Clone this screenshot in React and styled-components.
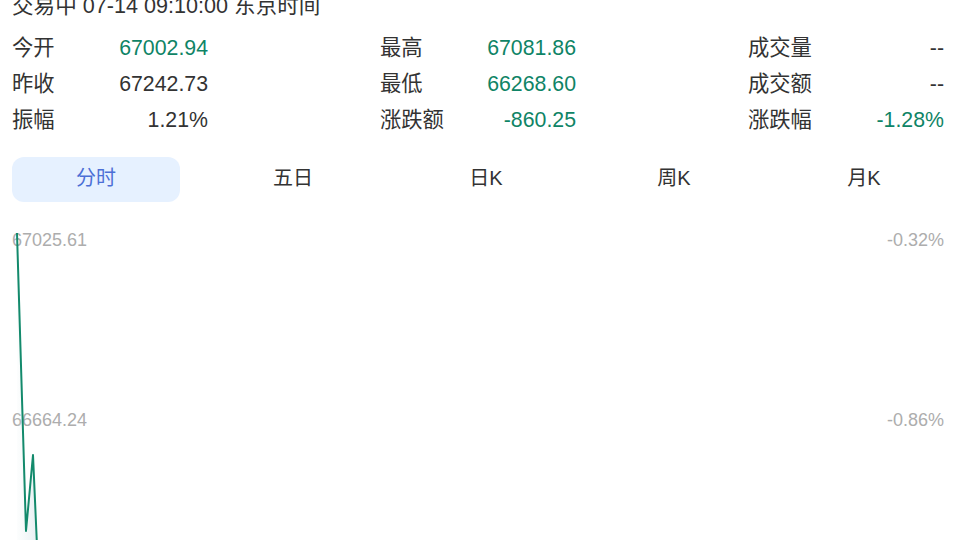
import React from "react";
import styled, { createGlobalStyle } from "styled-components";

const Global = createGlobalStyle`
  html, body { margin: 0; padding: 0; background: #fff; }
  body {
    font-family: "Liberation Sans", Arial, "Noto Sans CJK SC", sans-serif;
    color: #333;
    overflow: hidden;
  }
`;

const Page = styled.div`
  width: 960px;
  height: 540px;
  padding: 0 16px 0 12px;
  box-sizing: border-box;
  overflow: hidden;
`;

const Status = styled.div`
  margin-top: -7px;
  font-size: 21.6px;
  line-height: 26px;
  color: #333;
  white-space: nowrap;
`;

const StatsGrid = styled.div`
  margin-top: 11px;
  display: grid;
  grid-template-columns: repeat(3, 196px);
  justify-content: space-between;
  grid-auto-rows: 36px;
`;

const Stat = styled.div`
  display: flex;
  align-items: center;
  justify-content: space-between;
  font-size: 21.3px;
`;

/* CJK glyphs sit low on the Latin baseline; lift them to the digits' centre */
const StatLabel = styled.span`
  color: #333;
  padding-bottom: 5px;
`;

const StatValue = styled.span`
  color: ${(p) => (p.$tone === "down" ? "#0f8466" : "#333")};
`;

const Tabs = styled.div`
  margin-top: 19px;
  display: grid;
  grid-template-columns: repeat(5, 168px);
  justify-content: space-between;
`;

const Tab = styled.div`
  height: 45px;
  box-sizing: border-box;
  padding-bottom: 6px;
  border-radius: 12px;
  display: flex;
  align-items: center;
  justify-content: center;
  font-size: 20px;
  background: ${(p) => (p.$active ? "#e6f1ff" : "transparent")};
  color: ${(p) => (p.$active ? "#4c6fd6" : "#333")};
`;

const TabText = styled.span`
  margin-left: ${(p) => (p.$shift || 0) * 2}px;
`;

const Chart = styled.div`
  position: relative;
  margin-top: 26px;
  height: 320px;
  display: flex;
  flex-direction: column;
  gap: 156px;
`;

const AxisRow = styled.div`
  display: flex;
  justify-content: space-between;
  font-size: 18px;
  line-height: 24px;
  color: #adadad;
`;

const Plot = styled.svg`
  position: absolute;
  left: 0;
  top: 0;
  overflow: visible;
`;

const axis = [
  { price: "67025.61", pct: "-0.32%" },
  { price: "66664.24", pct: "-0.86%" },
];

const stats = [
  ["今开", "67002.94", "down"],
  ["最高", "67081.86", "down"],
  ["成交量", "--", ""],
  ["昨收", "67242.73", ""],
  ["最低", "66268.60", "down"],
  ["成交额", "--", ""],
  ["振幅", "1.21%", ""],
  ["涨跌额", "-860.25", "down"],
  ["涨跌幅", "-1.28%", "down"],
];

const tabs = [
  { name: "分时", shift: 0 },
  { name: "五日", shift: 6 },
  { name: "日K", shift: 8 },
  { name: "周K", shift: 5 },
  { name: "月K", shift: 4 },
];

const line = [
  [5, 5],
  [14, 303],
  [21, 227],
  [25, 318],
];

export default function App() {
  const pts = line.map((p) => p.join(",")).join(" ");
  const area = `${pts} 25,330 5,330`;
  return (
    <Page>
      <Global />
      <Status>交易中 07-14 09:10:00 东京时间</Status>
      <StatsGrid>
        {stats.map(([label, value, tone]) => (
          <Stat key={label}>
            <StatLabel>{label}</StatLabel>
            <StatValue $tone={tone}>{value}</StatValue>
          </Stat>
        ))}
      </StatsGrid>
      <Tabs>
        {tabs.map((t, i) => (
          <Tab key={t.name} $active={i === 0}>
            <TabText $shift={t.shift}>{t.name}</TabText>
          </Tab>
        ))}
      </Tabs>
      <Chart>
        {axis.map((a) => (
          <AxisRow key={a.price}>
            <span>{a.price}</span>
            <span>{a.pct}</span>
          </AxisRow>
        ))}
        <Plot width="40" height="330" viewBox="0 0 40 330">
          <defs>
            <linearGradient id="fade" x1="0" y1="0" x2="1" y2="0">
              <stop offset="0" stopColor="#e4eff0" stopOpacity="0.1" />
              <stop offset="1" stopColor="#dde9ee" stopOpacity="0.7" />
            </linearGradient>
          </defs>
          <polygon points={area} fill="url(#fade)" />
          <polyline
            points={pts}
            fill="none"
            stroke="#138a6c"
            strokeWidth="2"
            strokeLinejoin="round"
          />
        </Plot>
      </Chart>
    </Page>
  );
}
